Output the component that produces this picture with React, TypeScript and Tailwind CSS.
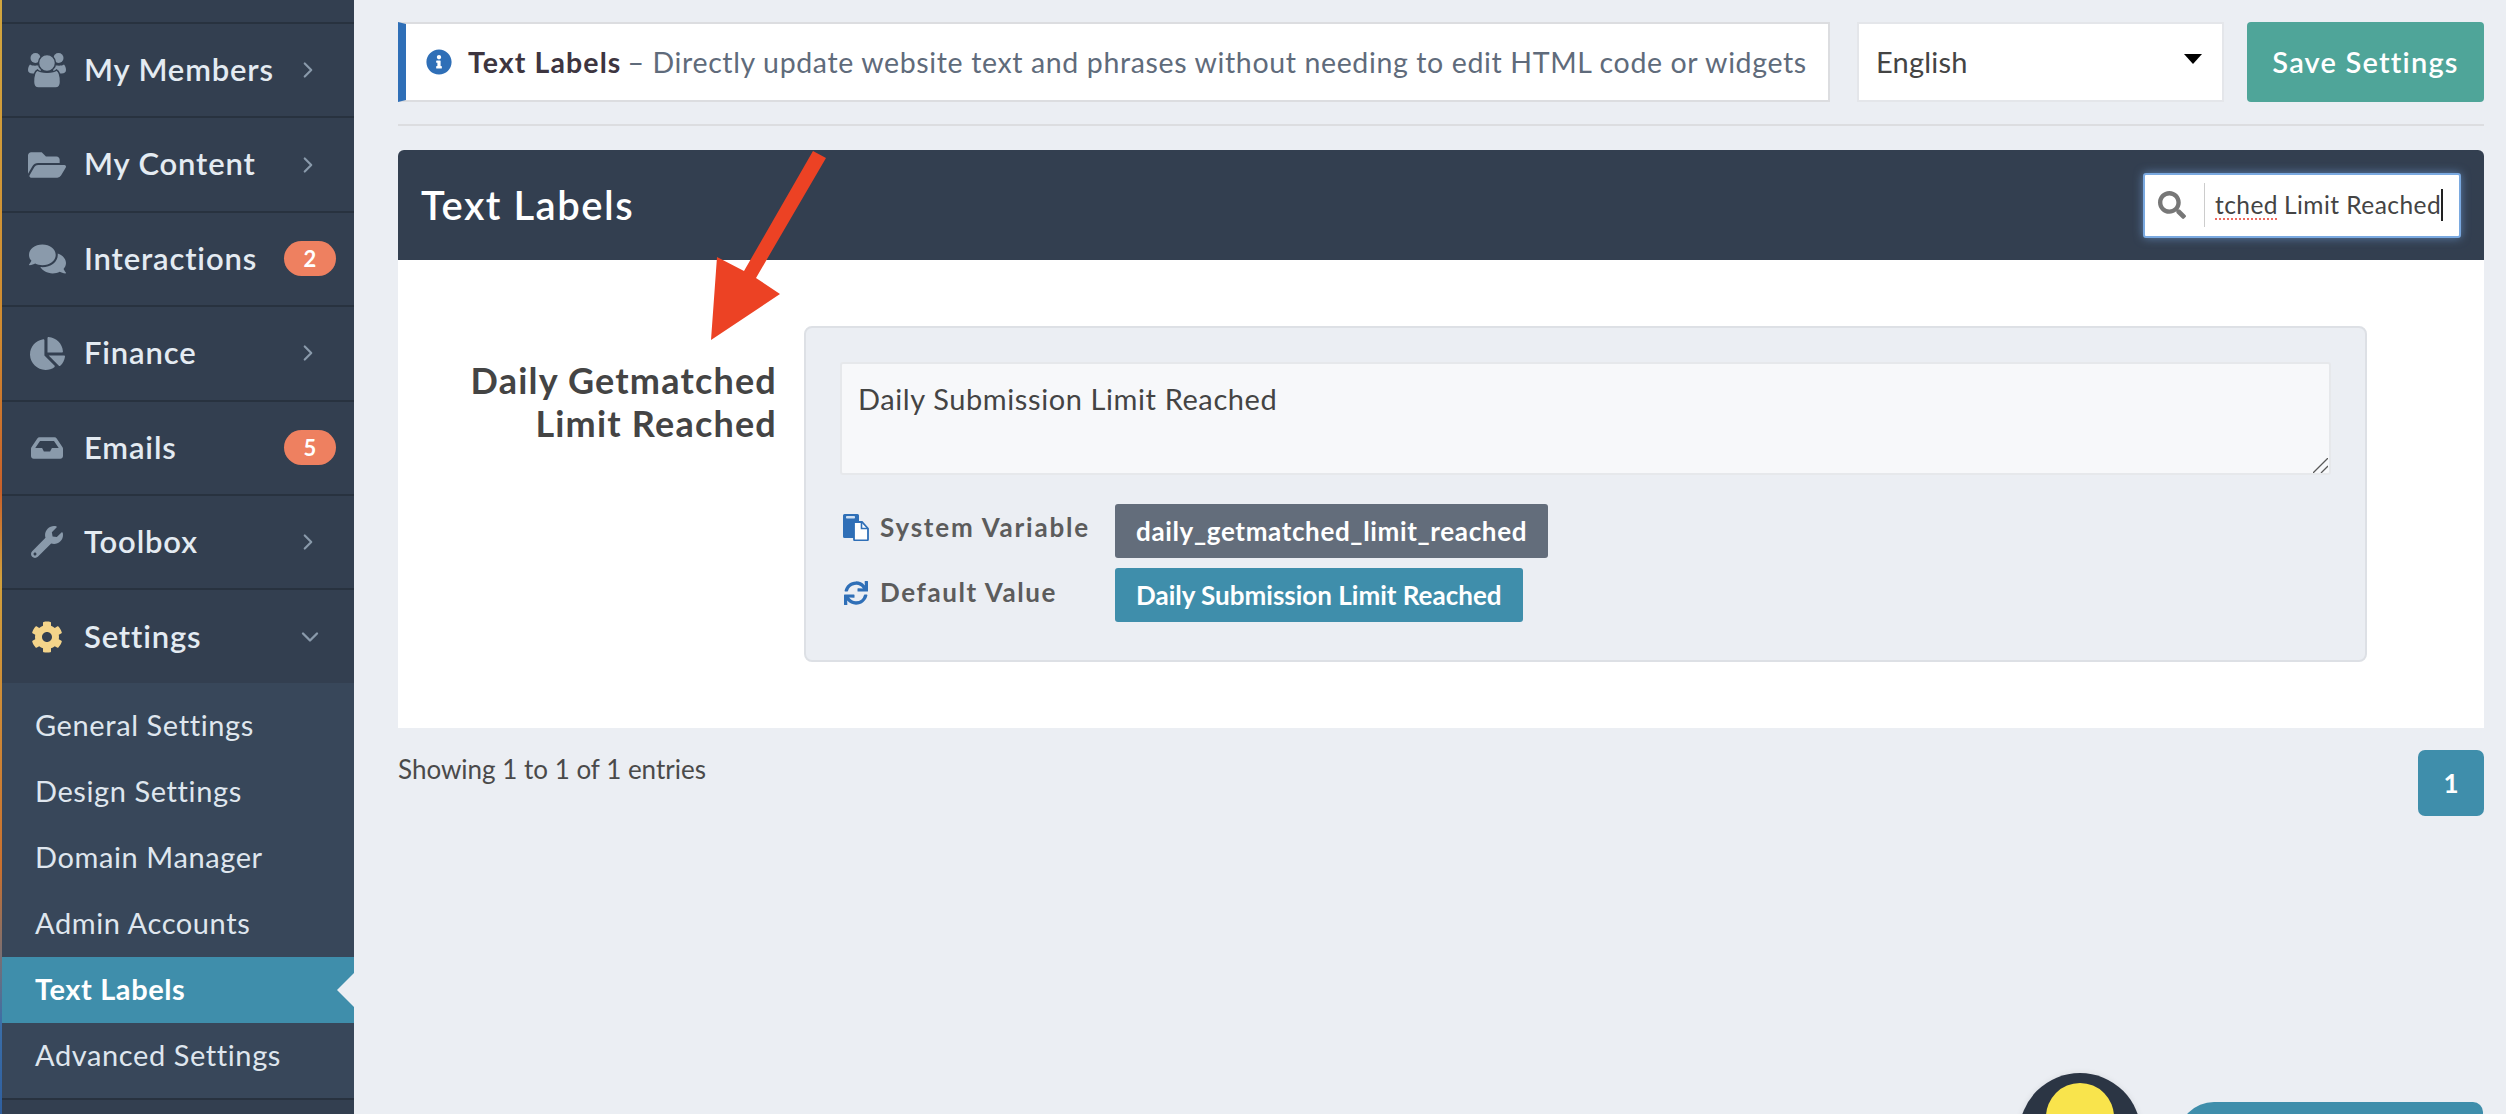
import React from "react";
import {
  FaFolderOpen, FaComments, FaChartPie, FaInbox, FaWrench, FaCog,
  FaInfoCircle, FaSearch, FaSync,
} from "react-icons/fa";
import { ChevronRight, ChevronDown } from "lucide-react";

function UsersIcon({ style }: { style?: React.CSSProperties }) {
  return (
    <svg viewBox="0 0 38 36" style={style} fill="currentColor">
      <circle cx="7.5" cy="6" r="5" />
      <circle cx="30.5" cy="6" r="5" />
      <path d="M2 12.5c2 1.6 8 1.6 10 0l3 2.5-4 6.500H4.500C1.500 21.500 0 20 0 18c0-2.500 1-4.500 2-5.500z" />
      <path d="M36 12.500c-2 1.600-8 1.600-10 0l-3 2.500 4 6.500h6.500c3 0 4.500-1.500 4.500-3.500 0-2.500-1-4.500-2-5.500z" />
      <circle cx="19" cy="11" r="8.500" stroke="#333f50" strokeWidth="1.5" />
      <path d="M9.500 18c3 3 16 3 19 0 2.500 1 4 5 4 12 0 4-2 6-5 6H10.500c-3 0-5-2-5-6 0-7 1.500-11 4-12z" stroke="#333f50" strokeWidth="1.5" />
    </svg>
  );
}

function PasteIcon({ style }: { style?: React.CSSProperties }) {
  return (
    <svg viewBox="0 0 26 27" style={style}>
      <path d="M1.500 0h13a1.500 1.500 0 0 1 1.500 1.500V24H1.500A1.500 1.500 0 0 1 0 22.500v-21A1.500 1.500 0 0 1 1.500 0z" fill="#2f6fb7" />
      <rect x="3" y="2" width="9" height="2.500" rx="0.800" fill="#cfe0f3" />
      <path d="M11 8h8l6 6.500v11a.800.800 0 0 1-.800.800H11.800a.800.800 0 0 1-.800-.800z" fill="#fff" stroke="#2f6fb7" strokeWidth="1.800" />
      <path d="M18.500 8v6.500H25" fill="none" stroke="#2f6fb7" strokeWidth="1.600" />
    </svg>
  );
}

const rows = [
  { label: "My Members", Icon: UsersIcon, w: 38, h: 36 },
  { label: "My Content", Icon: FaFolderOpen, w: 38, h: 36 },
  { label: "Interactions", Icon: FaComments, w: 37, h: 34 },
  { label: "Finance", Icon: FaChartPie, w: 35, h: 35 },
  { label: "Emails", Icon: FaInbox, w: 32, h: 32 },
  { label: "Toolbox", Icon: FaWrench, w: 32, h: 32 },
];
const badges: Record<string, string> = { Interactions: "2", Emails: "5" };
const subs = ["General Settings", "Design Settings", "Domain Manager", "Admin Accounts", "Text Labels", "Advanced Settings"];

function Row({ label, Icon, w, h }: { label: string; Icon: any; w: number; h: number }) {
  const badge = badges[label];
  return (
    <div className="flex h-[94.4px] shrink-0 items-center border-b-2 border-[#28323f] pl-[26px]">
      <div className="flex w-[38px] justify-center text-[#8a9aab]"><Icon style={{ width: w, height: h }} /></div>
      <span className="ml-[18px] pb-[2px] text-[31px] font-semibold tracking-[0.85px] text-[#e4ebf2]">{label}</span>
      <div className="ml-auto flex w-[70px] justify-center pr-[10px]">
        {badge ? (
          <span className="mr-[8px] flex h-[35px] w-[52px] shrink-0 items-center justify-center rounded-full bg-[#ee8060] text-[22px] font-bold text-white">{badge}</span>
        ) : (
          <ChevronRight className="ml-[-13px] text-[#8a9aab]" size={26} strokeWidth={2} />
        )}
      </div>
    </div>
  );
}

export default function App() {
  return (
    <div className="relative flex h-[1114px] w-[2506px] overflow-hidden bg-[#ebeef3] font-['Lato',sans-serif] text-[#444]">
      <aside className="flex w-[354px] shrink-0 bg-[#333f50]">
        <div className="w-[2px] shrink-0 bg-[linear-gradient(180deg,#d2a63f_0%,#d08a30_30%,#c8602a_44%,#d2a03c_52%,#c9702f_78%,#3a6ea8_92%,#2f5f9f_100%)]" />
        <div className="flex min-w-0 flex-1 flex-col">
          <div className="h-[24px] shrink-0 border-b-2 border-[#28323f]" />
          {rows.map((r) => <Row key={r.label} {...r} />)}
          <div className="flex h-[93px] shrink-0 items-center pl-[26px]">
            <div className="flex w-[38px] justify-center text-[#f4d48a]"><FaCog style={{ width: 32, height: 32 }} /></div>
            <span className="ml-[18px] pb-[2px] text-[31px] font-semibold tracking-[0.85px] text-[#e4ebf2]">Settings</span>
            <ChevronDown className="ml-auto mr-[30px] text-[#8a9aab]" size={28} strokeWidth={2} />
          </div>
          <div className="shrink-0 border-b-2 border-[#28323f] bg-[#38475a] pt-[10px] pb-[9px]">
            {subs.map((s) => {
              const active = s === "Text Labels";
              return (
                <div key={s} className={`relative flex h-[66px] items-center pb-[3px] pl-[33px] text-[29px] tracking-[0.6px] ${active ? "bg-[#3f8eab] font-bold text-white" : "text-[#dfe6ee]"}`}>
                  {s}
                  {active && <span className="absolute right-0 top-[16px] h-0 w-0 border-y-[17px] border-r-[17px] border-y-transparent border-r-[#ebeef3]" />}
                </div>
              );
            })}
          </div>
        </div>
      </aside>

      <main className="min-w-0 flex-1 pl-[44px] pr-[22px] pt-[22px]">
        <div className="flex h-[80px] items-stretch">
          <div className="flex flex-1 items-center whitespace-nowrap border-2 border-l-[8px] border-[#dcdde0] border-l-[#2f6fb7] bg-white pl-[20px] text-[28.5px]">
            <FaInfoCircle className="shrink-0 text-[#2f6fb7]" style={{ width: 26, height: 26 }} />
            <span className="ml-[16px] font-bold tracking-[1.1px] text-[#3d3540]">Text Labels</span>
            <span className="ml-[6px] tracking-[0.63px] text-[#5f6b7b]">– Directly update website text and phrases without needing to edit HTML code or widgets</span>
          </div>
          <div className="ml-[27px] flex w-[367px] items-center justify-between border-2 border-[#e4e6ea] bg-white pl-[17px] pr-[20px] text-[29px] tracking-[0.2px] text-[#444]">
            English
            <span className="mb-[6px] h-0 w-0 border-x-[9px] border-t-[10px] border-x-transparent border-t-black" />
          </div>
          <button className="ml-[23px] flex w-[237px] items-center justify-center rounded-[4px] bg-[#4fa599] text-[29px] font-semibold tracking-[1.2px] text-white">Save Settings</button>
        </div>
        <div className="mt-[22px] h-[2px] bg-[#dcdde0]" />

        <section className="mt-[24px]">
          <header className="flex h-[110px] items-center justify-between rounded-t-[6px] bg-[#333f50] pl-[23px] pr-[23px]">
            <h1 className="text-[40px] font-semibold tracking-[1.5px] text-white">Text Labels</h1>
            <div className="flex h-[65px] w-[318px] items-center overflow-hidden rounded-[3px] border-2 border-[#7aa9e0] bg-white shadow-[0_0_10px_rgba(120,170,230,0.6)]">
              <FaSearch className="ml-[13px] shrink-0 text-[#777]" style={{ width: 28, height: 28 }} />
              <div className="ml-[18px] h-[44px] w-[1px] shrink-0 bg-[#ccc]" />
              <div className="ml-[10px] flex items-center whitespace-nowrap text-[24.5px] tracking-[0.45px] text-[#444]">
                <span className="underline decoration-[#ee6a5f] decoration-dotted decoration-2 underline-offset-[5px]">tched</span>
                <span className="ml-[6px]">Limit Reached</span>
                <span className="h-[32px] w-[2px] bg-[#222]" />
              </div>
            </div>
          </header>
          <div className="flex h-[468px] items-start bg-white pt-[66px]">
            <div className="w-[379px] pt-[33px] text-right text-[36px] font-bold leading-[43px] tracking-[1.2px] text-[#444]">Daily Getmatched<br />Limit Reached</div>
            <div className="ml-[27px] h-[336px] w-[1563px] rounded-[8px] border-2 border-[#dde0e5] bg-[#ebeef3] px-[34px] pt-[34px]">
              <div className="relative">
                <textarea
                  readOnly
                  defaultValue="Daily Submission Limit Reached"
                  className="block h-[113px] w-full resize-none rounded-[3px] border-2 border-[#e6e8eb] bg-[#f7f8fa] px-[16px] py-[16px] text-[29px] leading-[38px] tracking-[0.6px] text-[#444] outline-none"
                />
                <svg className="absolute bottom-[2px] right-[3px]" width="15" height="15" viewBox="0 0 15 15">
                  <path d="M0 15 15 0M8 15l7-7" stroke="#5a5a5a" strokeWidth="1.300" fill="none" />
                </svg>
              </div>
              <div className="mt-[29px] flex h-[54px] items-start">
                <div className="flex w-[275px] items-center pl-[3px] pt-[4px] text-[26px] font-bold text-[#5c5c5c]">
                  <PasteIcon style={{ width: 26, height: 27 }} />
                  <span className="ml-[11px] tracking-[1.8px]">System Variable</span>
                </div>
                <span className="flex h-[54px] w-[433px] items-center rounded-[3px] bg-[#636d7b] pl-[21px] text-[26px] font-bold tracking-[0.65px] text-white">daily_getmatched_limit_reached</span>
              </div>
              <div className="mt-[10px] flex h-[54px] items-start">
                <div className="flex w-[275px] items-center pl-[4px] pt-[5px] text-[26px] font-bold text-[#5c5c5c]">
                  <FaSync className="shrink-0 text-[#2f6fb7]" style={{ width: 24, height: 24 }} />
                  <span className="ml-[12px] tracking-[1.6px]">Default Value</span>
                </div>
                <span className="flex h-[54px] w-[408px] items-center rounded-[3px] bg-[#3f8eab] pl-[21px] text-[26px] font-bold tracking-[0px] text-white">Daily Submission Limit Reached</span>
              </div>
            </div>
          </div>
        </section>

        <div className="mt-[22px] flex items-start justify-between">
          <span className="text-[26px] text-[#4a4a4a]">Showing 1 to 1 of 1 entries</span>
          <span className="flex h-[66px] w-[66px] items-center justify-center rounded-[7px] bg-[#3f8eab] text-[26px] font-bold text-white">1</span>
        </div>
      </main>

      <svg className="absolute left-[711px] top-[151px]" width="116" height="190" viewBox="711 151 116 190">
        <polygon fill="#ec4224" points="813,151 826,158 756,278 780,294 711,340 717,257 744,271" />
      </svg>

      <div className="absolute left-[2019px] top-[1073px] h-[122px] w-[122px] rounded-full bg-[#2b3544] shadow-[0_0_6px_rgba(0,0,0,0.08)]" />
      <div className="absolute left-[2046px] top-[1083px] h-[68px] w-[68px] rounded-full bg-[#f9e44c]" />
      <div className="absolute left-[2178px] top-[1102px] h-[60px] w-[305px] rounded-t-[10px] rounded-tl-[36px] bg-[#3f8eab]" />
    </div>
  );
}
